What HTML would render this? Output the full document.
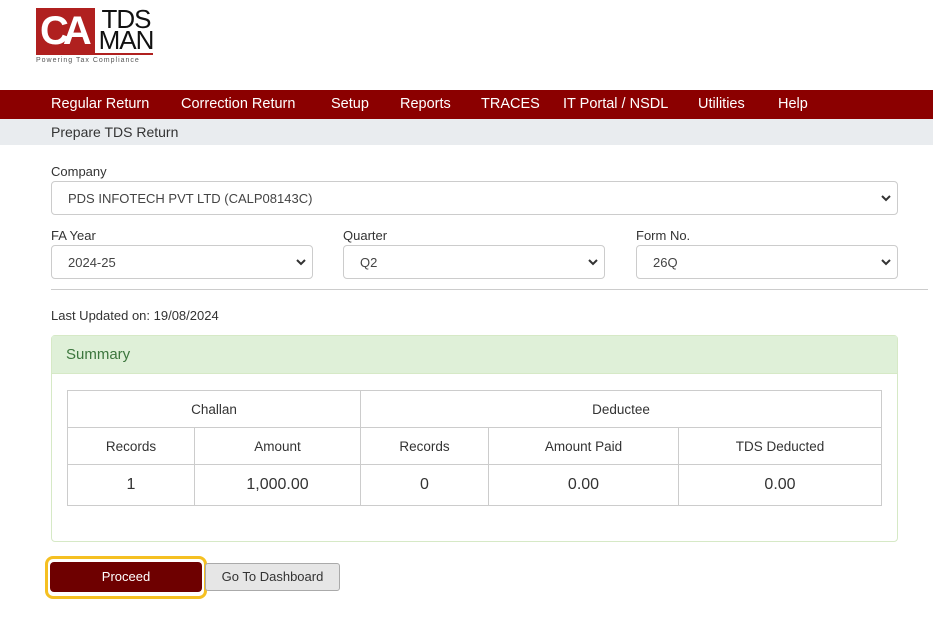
<!DOCTYPE html>
<html><head><style>
*{box-sizing:border-box;margin:0;padding:0}
body{width:933px;height:626px;background:#fff;font-family:"Liberation Sans",sans-serif;color:#333;position:relative;overflow:hidden;font-size:13px}
.a{position:absolute}
.nav{left:0;top:90px;width:933px;height:29px;background:#8b0000}
.nav span{position:absolute;top:6px;color:#fff;font-size:14.5px}
.sub{left:0;top:119px;width:933px;height:26px;background:#e9ecef;}
.sel{position:absolute;height:34px;border:1px solid #ccc;border-radius:4px;background:#fff;font-size:13px;color:#444;padding:9px 16px}
.sel svg{position:absolute;right:6px;top:12px}
.lbl{position:absolute;font-size:13px;color:#333}
table{border-collapse:collapse;position:absolute;left:67px;top:390px;width:815px;font-size:13.5px;color:#333}
td{border:1px solid #ccc;text-align:center}
</style></head><body>
<div class="a" style="left:36px;top:8px;width:59px;height:46px;background:#b0201f"></div>
<div class="a" style="left:40px;top:10px;font-size:40px;color:#fff;font-weight:bold;letter-spacing:-6px;line-height:42px">CA</div>
<div class="a" style="left:96px;top:9px;font-size:26px;line-height:21px;color:#111;width:60px;text-align:center;letter-spacing:-1px">TDS<br>MAN</div>
<div class="a" style="left:36px;top:53px;width:117px;height:2px;background:#b0201f"></div>
<div class="a" style="left:36px;top:57px;font-size:7px;color:#555;letter-spacing:1px">Powering Tax Compliance</div>
<div class="a nav">
<span style="left:51px">Regular Return</span><span style="left:181px">Correction Return</span><span style="left:331px">Setup</span><span style="left:400px">Reports</span><span style="left:481px">TRACES</span><span style="left:563px">IT Portal / NSDL</span><span style="left:698px">Utilities</span><span style="left:778px">Help</span>
</div>
<div class="a sub"><span style="position:absolute;left:51px;top:5px;font-size:14px;color:#333">Prepare TDS Return</span></div>
<div class="lbl" style="left:51px;top:164px">Company</div>
<div class="sel" style="left:51px;top:181px;width:847px">PDS INFOTECH PVT LTD (CALP08143C)<svg width="10" height="8"><path d="M1 2l4 4 4-4" stroke="#333" stroke-width="2" fill="none"/></svg></div>
<div class="lbl" style="left:51px;top:228px">FA Year</div>
<div class="sel" style="left:51px;top:245px;width:262px">2024-25<svg width="10" height="8"><path d="M1 2l4 4 4-4" stroke="#333" stroke-width="2" fill="none"/></svg></div>
<div class="lbl" style="left:343px;top:228px">Quarter</div>
<div class="sel" style="left:343px;top:245px;width:262px">Q2<svg width="10" height="8"><path d="M1 2l4 4 4-4" stroke="#333" stroke-width="2" fill="none"/></svg></div>
<div class="lbl" style="left:636px;top:228px">Form No.</div>
<div class="sel" style="left:636px;top:245px;width:262px">26Q<svg width="10" height="8"><path d="M1 2l4 4 4-4" stroke="#333" stroke-width="2" fill="none"/></svg></div>
<div class="a" style="left:51px;top:289px;width:877px;height:1px;background:#ccc"></div>
<div class="lbl" style="left:51px;top:308px">Last Updated on: 19/08/2024</div>
<div class="a" style="left:51px;top:335px;width:847px;height:207px;border:1px solid #d6e9c6;border-radius:4px"></div>
<div class="a" style="left:52px;top:336px;width:845px;height:38px;background:#dff0d8;border-bottom:1px solid #d6e9c6"><span style="position:absolute;left:14px;top:10px;font-size:15px;color:#3c763d">Summary</span></div>
<table>
<tr style="height:37px"><td colspan="2">Challan</td><td colspan="3">Deductee</td></tr>
<tr style="height:37px"><td style="width:127px">Records</td><td style="width:166px">Amount</td><td style="width:128px">Records</td><td style="width:190px">Amount Paid</td><td>TDS Deducted</td></tr>
<tr style="height:41px;font-size:16px"><td>1</td><td>1,000.00</td><td>0</td><td>0.00</td><td>0.00</td></tr>
</table>
<div class="a" style="left:45px;top:556px;width:162px;height:43px;border:3px solid #f5c022;border-radius:8px"></div>
<div class="a" style="left:50px;top:562px;width:152px;height:30px;background:#6e0000;border-radius:4px;color:#fff;text-align:center;line-height:30px;font-size:13px">Proceed</div>
<div class="a" style="left:205px;top:563px;width:135px;height:28px;background:#e6e6e6;border:1px solid #aaa;border-radius:3px;color:#333;text-align:center;line-height:26px;font-size:13px">Go To Dashboard</div>
</body></html>
